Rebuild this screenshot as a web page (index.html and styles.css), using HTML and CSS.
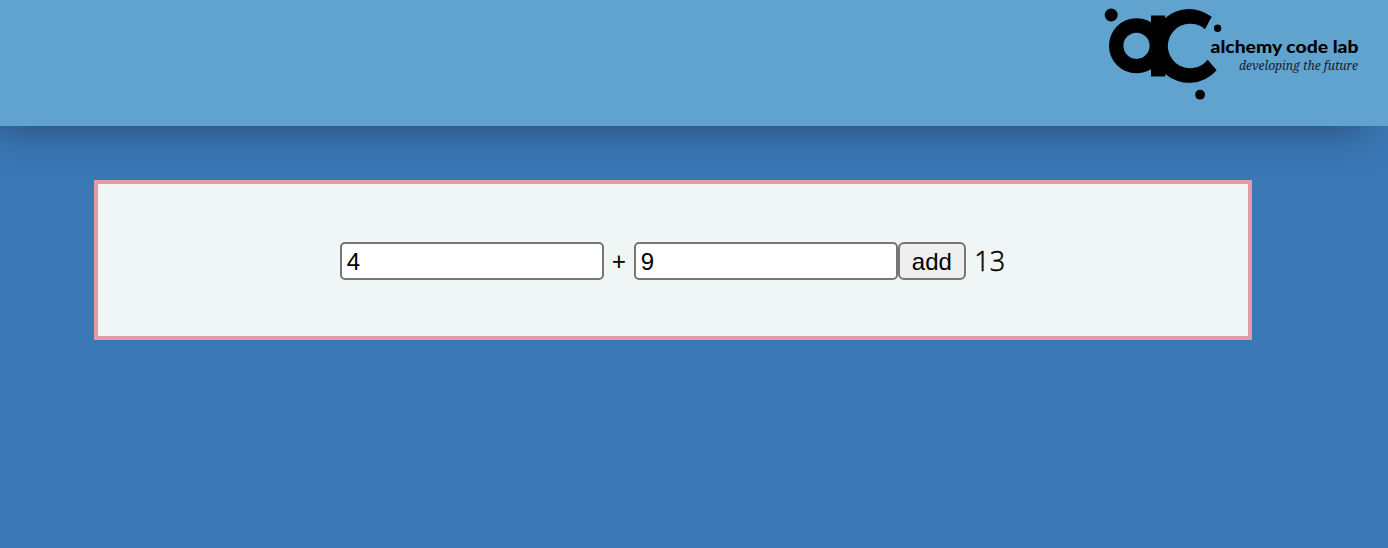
FILE: index.html
```html
<!DOCTYPE html>
<html lang="en">
<head>
<meta charset="utf-8">
<title>Adder</title>
<link rel="stylesheet" href="styles.css">
</head>
<body>
<header class="header">
  <svg class="logo" width="268" height="110" viewBox="1100 0 268 110" role="img" aria-label="alchemy code lab">
    <circle cx="1111.2" cy="15" r="6.5"/>
    <circle cx="1217.6" cy="28.3" r="3.7"/>
    <circle cx="1200.1" cy="94.7" r="4.9"/>
    <circle class="ring" cx="1136.5" cy="45.8" r="20.3"/>
    <rect x="1151" y="15.5" width="14.2" height="61"/>
    <path d="M1211.7 16.8A36.7 36.7 0 0 0 1165.2 18H1160V74H1165.2A36.7 36.7 0 0 0 1216.7 70.3L1207.7 59.7A22.3 22.3 0 1 1 1205 29.3Z"/>
    <text class="name" x="1210.5" y="53" textLength="148" lengthAdjust="spacingAndGlyphs">alchemy code lab</text>
    <text class="tagline" x="1239" y="70" textLength="119" lengthAdjust="spacingAndGlyphs">developing the future</text>
  </svg>
</header>
<main class="panel">
  <input class="field" value="4" aria-label="First number">
  <span class="plus">+</span>
  <input class="field" value="9" aria-label="Second number">
  <button class="add">add</button>
  <span class="result">13</span>
</main>
</body>
</html>
```
FILE: styles.css
```css
* { box-sizing: border-box; }
body {
  margin: 0;
  min-height: 548px;
  overflow: hidden;
  background: #3b78b6;
  color: #000;
  font-family: "Noto Sans", "Open Sans", sans-serif;
}
.header {
  display: flex;
  justify-content: flex-end;
  height: 126px;
  padding-right: 20px;
  background: #61a3cf;
  box-shadow: -14px 14px 40px -10px rgba(30, 45, 75, 0.6);
}
.logo { display: block; }
.ring { fill: none; stroke: #000; stroke-width: 14.4; }
.name { font: 900 16.5px Lato, sans-serif; }
.tagline { font: italic 13px "Noto Serif", "Liberation Serif", serif; fill: #10212c; }
.panel {
  position: relative;
  display: flex;
  align-items: center;
  justify-content: center;
  width: 1158px;
  height: 160px;
  margin: 54px 0 0 94px;
  padding: 2px 1px 0 0;
  border: 4px solid #e39ba7;
  background: #f0f6f6;
}
.field {
  width: 264px;
  height: 38px;
  padding: 3px 5px 1px;
  border: 2px solid #767676;
  border-radius: 5px;
  background: #fff;
  color: #000;
  font: 24px "Liberation Sans", Arial, sans-serif;
}
.plus {
  width: 30px;
  text-align: center;
  font-size: 25px;
}
.add {
  width: 68px;
  height: 38px;
  padding: 1px 0 0;
  border: 2px solid #767676;
  border-radius: 6px;
  background: #efefef;
  color: #000;
  font: 24px "Liberation Sans", Arial, sans-serif;
}
.result {
  margin-left: 8.5px;
  font: 300 27px/38px "Open Sans", "Noto Sans", sans-serif;
  -webkit-text-stroke: 0.5px #000;
}
```
